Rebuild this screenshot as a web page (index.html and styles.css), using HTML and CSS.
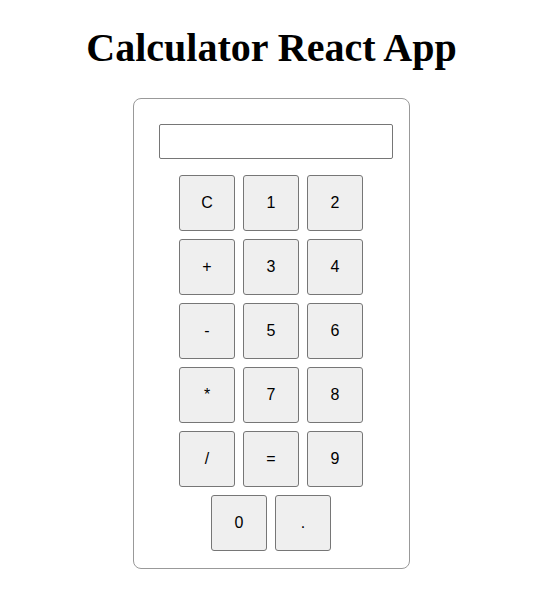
FILE: index.html
```html
<!DOCTYPE html>
<html>
<head>
<meta charset="utf-8">
<link rel="stylesheet" href="styles.css">
</head>
<body>
<h1 class="title">Calculator React App</h1>
<div class="card">
  <input class="display" type="text">
  <div class="keypad">
    <button class="key">C</button>
    <button class="key">1</button>
    <button class="key">2</button>
    <button class="key">+</button>
    <button class="key">3</button>
    <button class="key">4</button>
    <button class="key">-</button>
    <button class="key">5</button>
    <button class="key">6</button>
    <button class="key">*</button>
    <button class="key">7</button>
    <button class="key">8</button>
    <button class="key">/</button>
    <button class="key">=</button>
    <button class="key">9</button>
    <button class="key">0</button>
    <button class="key">.</button>
  </div>
</div>
</body>
</html>
```
FILE: styles.css
```css
html, body {
  margin: 0;
  background: #ffffff;
}
body {
  padding: 0 2px 0 0;
  font-family: "Liberation Serif", "Times New Roman", serif;
}
.title {
  margin: 26px 0 28px;
  font-size: 40px;
  line-height: 44px;
  font-weight: bold;
  text-align: center;
  color: #000;
}
.card {
  box-sizing: border-box;
  width: 277px;
  margin: 0 auto;
  padding: 25px 25px 17px 24px;
  border: 1px solid #999999;
  border-radius: 8px;
}
.display {
  display: block;
  box-sizing: border-box;
  width: 234px;
  height: 35px;
  margin: 0 0 0 1px;
  padding: 2px 6px;
  border: 1px solid #767676;
  border-radius: 2px;
  font-family: "Liberation Sans", Arial, sans-serif;
  font-size: 16px;
  background: #fff;
}
.keypad {
  display: flex;
  flex-wrap: wrap;
  justify-content: center;
  gap: 8px;
  margin-top: 16px;
}
.key {
  box-sizing: border-box;
  width: 56px;
  height: 56px;
  margin: 0;
  padding: 0;
  border: 1px solid #767676;
  border-radius: 3px;
  background: #efefef;
  color: #000;
  font-family: "Liberation Sans", Arial, sans-serif;
  font-size: 16px;
}
```
